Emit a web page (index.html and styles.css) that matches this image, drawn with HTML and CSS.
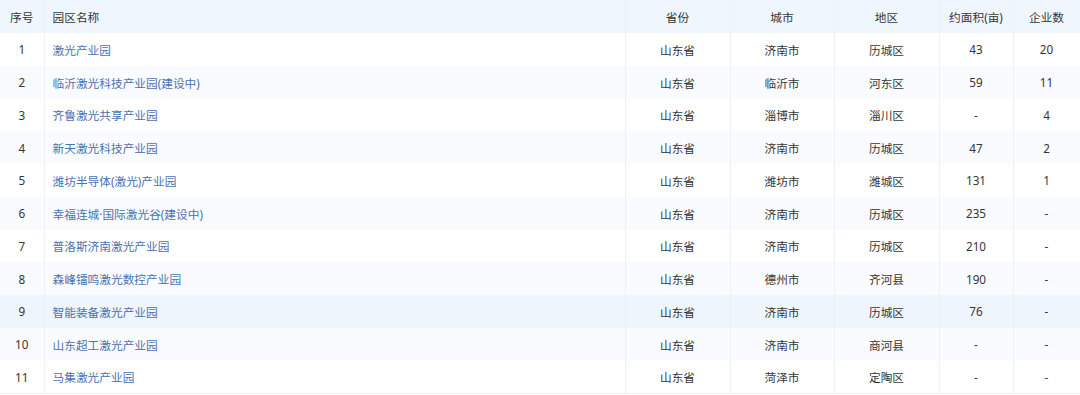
FILE: index.html
```html
<!DOCTYPE html>
<html lang="zh-CN">
<head>
<meta charset="utf-8">
<title>园区列表</title>
<link rel="stylesheet" href="styles.css">
</head>
<body>
<table class="park-table">
  <colgroup>
    <col class="c-idx"><col class="c-name"><col class="c-prov"><col class="c-city"><col class="c-area"><col class="c-size"><col class="c-count">
  </colgroup>
  <thead>
    <tr><th>序号</th><th class="left">园区名称</th><th>省份</th><th>城市</th><th>地区</th><th>约面积(亩)</th><th>企业数</th></tr>
  </thead>
  <tbody>
    <tr><td>1</td><td class="left"><a class="link">激光产业园</a></td><td>山东省</td><td>济南市</td><td>历城区</td><td>43</td><td>20</td></tr>
    <tr><td>2</td><td class="left"><a class="link">临沂激光科技产业园(建设中)</a></td><td>山东省</td><td>临沂市</td><td>河东区</td><td>59</td><td>11</td></tr>
    <tr><td>3</td><td class="left"><a class="link">齐鲁激光共享产业园</a></td><td>山东省</td><td>淄博市</td><td>淄川区</td><td>-</td><td>4</td></tr>
    <tr><td>4</td><td class="left"><a class="link">新天激光科技产业园</a></td><td>山东省</td><td>济南市</td><td>历城区</td><td>47</td><td>2</td></tr>
    <tr><td>5</td><td class="left"><a class="link">潍坊半导体(激光)产业园</a></td><td>山东省</td><td>潍坊市</td><td>潍城区</td><td>131</td><td>1</td></tr>
    <tr><td>6</td><td class="left"><a class="link">幸福连城·国际激光谷(建设中)</a></td><td>山东省</td><td>济南市</td><td>历城区</td><td>235</td><td>-</td></tr>
    <tr><td>7</td><td class="left"><a class="link">普洛斯济南激光产业园</a></td><td>山东省</td><td>济南市</td><td>历城区</td><td>210</td><td>-</td></tr>
    <tr><td>8</td><td class="left"><a class="link">森峰镭鸣激光数控产业园</a></td><td>山东省</td><td>德州市</td><td>齐河县</td><td>190</td><td>-</td></tr>
    <tr class="hover"><td>9</td><td class="left"><a class="link">智能装备激光产业园</a></td><td>山东省</td><td>济南市</td><td>历城区</td><td>76</td><td>-</td></tr>
    <tr><td>10</td><td class="left"><a class="link">山东超工激光产业园</a></td><td>山东省</td><td>济南市</td><td>商河县</td><td>-</td><td>-</td></tr>
    <tr><td>11</td><td class="left"><a class="link">马集激光产业园</a></td><td>山东省</td><td>菏泽市</td><td>定陶区</td><td>-</td><td>-</td></tr>
  </tbody>
</table>
</body>
</html>
```

FILE: styles.css
```css
html, body {
  margin: 0;
  padding: 0;
  background: #ffffff;
}
body {
  font-family: "Noto Sans", "Noto Sans CJK SC", sans-serif;
  font-size: 11.7px;
  color: #363636;
}
.park-table {
  width: 1080px;
  border-collapse: collapse;
  table-layout: fixed;
  border-bottom: 1px solid #edf0f5;
}
.c-idx { width: 44px; }
.c-name { width: 581px; }
.c-prov { width: 105px; }
.c-city { width: 104px; }
.c-area { width: 105px; }
.c-size { width: 74px; }
.c-count { width: 67px; }
.park-table th,
.park-table td {
  text-align: center;
  padding: 0 8px;
  border-left: 1px solid #edf0f5;
  white-space: nowrap;
  font-weight: normal;
}
.park-table th:first-child,
.park-table td:first-child {
  border-left: none;
}
.park-table th:last-child,
.park-table td:last-child {
  border-right: 1px solid #edf0f5;
}
.park-table thead tr {
  height: 33px;
  background: #f0f6fe;
}
.park-table th {
  color: #363636;
}
.park-table tbody tr {
  height: 32.75px;
}
.park-table tbody tr:nth-child(even) {
  background: #f9fbfe;
}
.park-table tbody tr.hover {
  background: #eef5fd;
}
.park-table .left {
  text-align: left;
}
.link {
  color: #4a72b0;
  text-decoration: none;
}
```
